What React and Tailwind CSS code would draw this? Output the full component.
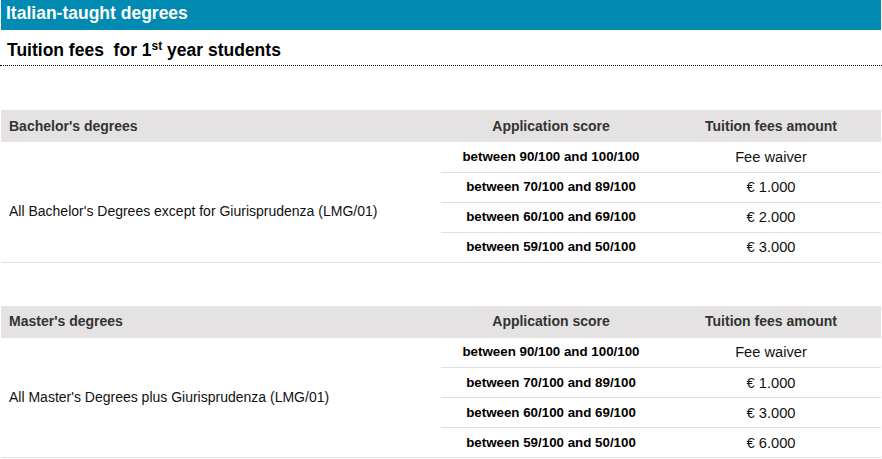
import React from "react";

const bachelor = [
  ["between 90/100 and 100/100", "Fee waiver"],
  ["between 70/100 and 89/100", "€ 1.000"],
  ["between 60/100 and 69/100", "€ 2.000"],
  ["between 59/100 and 50/100", "€ 3.000"],
];

const master = [
  ["between 90/100 and 100/100", "Fee waiver"],
  ["between 70/100 and 89/100", "€ 1.000"],
  ["between 60/100 and 69/100", "€ 3.000"],
  ["between 59/100 and 50/100", "€ 6.000"],
];

const FeeTable = ({ title, label, rows, labelClass = "" }) => (
  <table className="w-[880px] ml-px border-collapse table-fixed">
    <colgroup>
      <col className="w-[440px]" />
      <col className="w-[220px]" />
      <col className="w-[220px]" />
    </colgroup>
    <thead>
      <tr className="h-[32px] bg-[#e4e2e3] text-[14px] font-bold text-[#333]">
        <th className="text-left pl-2 font-bold">{title}</th>
        <th className="text-center font-bold">Application score</th>
        <th className="text-center font-bold">Tuition fees amount</th>
      </tr>
    </thead>
    <tbody>
      {rows.map((row, i) => (
        <tr key={i} className="h-[30px]">
          {i === 0 && (
            <td
              rowSpan={rows.length}
              className={
                "pl-2 text-[14px] text-[#111] border-b border-[#e0e0e0] " +
                labelClass
              }
            >
              {label}
            </td>
          )}
          <td className="text-center text-[13.33px] font-bold text-black border-b border-[#e0e0e0]">
            {row[0]}
          </td>
          <td className="text-center text-[14.67px] text-[#111] border-b border-[#e0e0e0]">
            {row[1]}
          </td>
        </tr>
      ))}
    </tbody>
  </table>
);

export default function App() {
  return (
    <div className="w-[882px] bg-white font-['Liberation_Sans',Arial,sans-serif]">
      <div className="ml-px w-[880px] h-[30px] bg-[#018bb2] text-white font-bold text-[17.5px] leading-[26px] pl-[5px]">
        Italian-taught degrees
      </div>
      <div className="h-[36px] border-b border-dotted border-black pt-[10px] pl-[7px] text-[17.5px] font-bold text-black leading-[20px]">
        Tuition fees&nbsp; for 1<sup className="text-[12px] leading-none">st</sup> year students
      </div>
      <div className="mt-[44px]">
        <FeeTable
          title="Bachelor's degrees"
          label="All Bachelor's Degrees except for Giurisprudenza (LMG/01)"
          rows={bachelor}
          labelClass="pt-[20px]"
        />
      </div>
      <div className="mt-[43px]">
        <FeeTable
          title="Master's degrees"
          label="All Master's Degrees plus Giurisprudenza (LMG/01)"
          rows={master}
        />
      </div>
    </div>
  );
}
